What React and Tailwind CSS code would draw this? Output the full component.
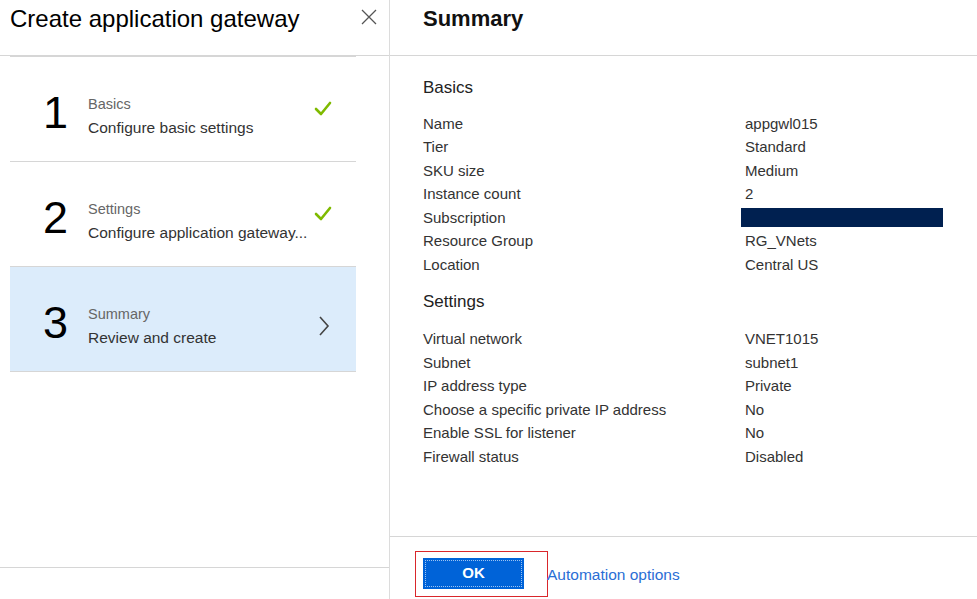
import React from "react";

const basics = [
  ["Name", "appgwl015"],
  ["Tier", "Standard"],
  ["SKU size", "Medium"],
  ["Instance count", "2"],
  ["Subscription", null],
  ["Resource Group", "RG_VNets"],
  ["Location", "Central US"],
];

const settings = [
  ["Virtual network", "VNET1015"],
  ["Subnet", "subnet1"],
  ["IP address type", "Private"],
  ["Choose a specific private IP address", "No"],
  ["Enable SSL for listener", "No"],
  ["Firewall status", "Disabled"],
];

const steps = [
  { num: "1", title: "Basics", sub: "Configure basic settings", done: true },
  { num: "2", title: "Settings", sub: "Configure application gateway...", done: true },
  { num: "3", title: "Summary", sub: "Review and create", active: true },
];

const Check = () => (
  <svg width="18" height="16" viewBox="0 0 18 16" fill="none">
    <polyline points="2,8 7,13 16,2" stroke="#7fba00" strokeWidth="2.6" strokeLinecap="round" strokeLinejoin="round" />
  </svg>
);

const Chevron = () => (
  <svg width="12" height="22" viewBox="0 0 12 22" fill="none">
    <polyline points="2,2 10,11 2,20" stroke="#444" strokeWidth="1.6" />
  </svg>
);

const Step = ({ step }) => (
  <div
    className={`h-[105px] flex border-b border-[#d6d6d6] pl-[33px] pr-[24px] pt-[37px] ${
      step.active ? "bg-[#dcecfb]" : "bg-white"
    }`}
  >
    <div className="w-[45px] text-[45px] leading-[40px] text-black mt-[-1px]">{step.num}</div>
    <div className="flex-1">
      <div className="text-[14.5px] leading-[20px] text-[#666]">{step.title}</div>
      <div className="text-[15.5px] leading-[27px] text-[#333] whitespace-nowrap">{step.sub}</div>
    </div>
    <div className="pt-[7px]">{step.done ? <Check /> : <div className="pt-[4px] pr-[2px]"><Chevron /></div>}</div>
  </div>
);

const Row = ({ label, value }) => (
  <div className="flex h-[23.5px] items-center text-[15px] text-[#333]">
    <div className="w-[322px] whitespace-nowrap">{label}</div>
    {value === null ? (
      <div className="w-[202px] h-[19px] -ml-[4px] bg-[#002050]" />
    ) : (
      <div>{value}</div>
    )}
  </div>
);

export default function App() {
  return (
    <div
      className="flex w-[977px] h-[599px] bg-white overflow-hidden"
      style={{ fontFamily: '"Liberation Sans", Arial, sans-serif' }}
    >
      <div className="w-[390px] flex flex-col border-r border-[#dcdcdc]">
        <div className="h-[56px] flex items-start justify-between border-b border-[#d6d6d6] pl-[10px] pr-[12px] pt-[4px]">
          <div className="text-[24px] leading-[30px] text-black">Create application gateway</div>
          <svg width="16" height="16" viewBox="0 0 16 16" className="mt-[5px]">
            <path d="M1 1L15 15M15 1L1 15" stroke="#555" strokeWidth="1.3" />
          </svg>
        </div>
        <div className="mx-[10px] w-[346px] border-t border-[#d6d6d6]">
          {steps.map((s) => (
            <Step key={s.num} step={s} />
          ))}
        </div>
        <div className="flex-1" />
        <div className="h-[32px] border-t border-[#d6d6d6]" />
      </div>

      <div className="flex-1 flex flex-col">
        <div className="h-[56px] border-b border-[#d6d6d6] pl-[33px] pt-[5px]">
          <div className="text-[22px] leading-[28px] font-semibold text-[#111]">Summary</div>
        </div>
        <div className="flex-1 pl-[33px] pt-[20px]">
          <div className="text-[17px] leading-[24px] text-[#222] mb-[12px]">Basics</div>
          {basics.map(([l, v]) => (
            <Row key={l} label={l} value={v} />
          ))}
          <div className="text-[17px] leading-[24px] text-[#222] mt-[13px] mb-[14px]">Settings</div>
          {settings.map(([l, v]) => (
            <Row key={l} label={l} value={v} />
          ))}
        </div>
        <div className="h-[63px] border-t border-[#d6d6d6] pl-[25px] pt-[14px] flex items-start">
          <div className="border border-[#d9262b] pt-[6px] pb-[7px] pl-[7px] pr-[23px]">
            <button className="w-[101px] h-[31px] bg-[#0063d8] p-[2px]">
              <div className="w-full h-full border border-dotted border-[#9cc3f2] flex items-center justify-center text-white font-bold text-[15px]">
                OK
              </div>
            </button>
          </div>
          <div className="-ml-[1px] mt-[14px] text-[15.5px] leading-[20px] text-[#2a6ed5]">Automation options</div>
        </div>
      </div>
    </div>
  );
}
